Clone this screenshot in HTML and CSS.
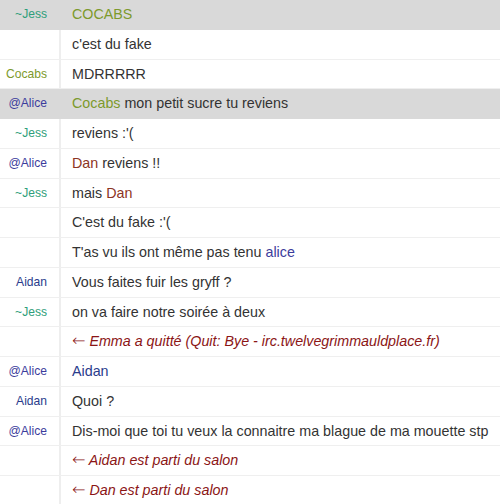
FILE: index.html
```html
<!DOCTYPE html>
<html lang="fr">
<head>
<meta charset="utf-8">
<title>Log</title>
<link rel="stylesheet" href="styles.css">
</head>
<body>
<div class="log">
  <div class="row hl"><div class="nick jess">~Jess</div><div class="msg"><span class="cocabs">COCABS</span></div></div>
  <div class="row"><div class="nick"></div><div class="msg">c'est du fake</div></div>
  <div class="row"><div class="nick cocabs">Cocabs</div><div class="msg">MDRRRRR</div></div>
  <div class="row hl"><div class="nick alice">@Alice</div><div class="msg"><span class="cocabs">Cocabs</span> mon petit sucre tu reviens</div></div>
  <div class="row"><div class="nick jess">~Jess</div><div class="msg">reviens :'(</div></div>
  <div class="row"><div class="nick alice">@Alice</div><div class="msg"><span class="dan">Dan</span> reviens !!</div></div>
  <div class="row"><div class="nick jess">~Jess</div><div class="msg">mais <span class="dan">Dan</span></div></div>
  <div class="row"><div class="nick"></div><div class="msg">C'est du fake :'(</div></div>
  <div class="row"><div class="nick"></div><div class="msg">T'as vu ils ont même pas tenu <span class="alice">alice</span></div></div>
  <div class="row"><div class="nick aidan">Aidan</div><div class="msg">Vous faites fuir les gryff ?</div></div>
  <div class="row"><div class="nick jess">~Jess</div><div class="msg">on va faire notre soirée à deux</div></div>
  <div class="row"><div class="nick"></div><div class="msg part"><span class="arrow">←</span> Emma a quitté (Quit: Bye - irc.twelvegrimmauldplace.fr)</div></div>
  <div class="row"><div class="nick alice">@Alice</div><div class="msg"><span class="aidan">Aidan</span></div></div>
  <div class="row"><div class="nick aidan">Aidan</div><div class="msg">Quoi ?</div></div>
  <div class="row"><div class="nick alice">@Alice</div><div class="msg">Dis-moi que toi tu veux la connaitre ma blague de ma mouette stp</div></div>
  <div class="row"><div class="nick"></div><div class="msg part"><span class="arrow">←</span> Aidan est parti du salon</div></div>
  <div class="row"><div class="nick"></div><div class="msg part"><span class="arrow">←</span> Dan est parti du salon</div></div>
</div>
</body>
</html>
```
FILE: styles.css
```css
html, body {
  margin: 0;
  padding: 0;
  background: #fff;
}
body {
  font-family: "Liberation Sans", Arial, sans-serif;
  color: #333;
}
.log {
  display: flex;
  flex-direction: column;
}
.row {
  display: flex;
  height: 29.75px;
  box-sizing: border-box;
  border-bottom: 1px solid #efefef;
}
.row.hl {
  background: #d9d9d9;
  border-bottom-color: #d9d9d9;
}
.nick {
  width: 61px;
  flex: none;
  box-sizing: border-box;
  padding-right: 12px;
  text-align: right;
  font-size: 12.1px;
  line-height: 28.75px;
  white-space: nowrap;
  border-right: 2px solid #eeeeee;
}
.row.hl .nick {
  border-right-color: #d9d9d9;
}
.msg {
  flex: 1;
  padding-left: 11px;
  font-size: 14.3px;
  line-height: 28.75px;
  white-space: nowrap;
}
.jess { color: #2f9e7a; }
.cocabs { color: #7d9a2c; }
.alice { color: #3c3c9c; }
.aidan { color: #2a3c8c; }
.dan { color: #8c3424; }
.part {
  color: #8b1515;
  font-style: italic;
}
.arrow {
  font-family: "DejaVu Sans", sans-serif;
  font-style: normal;
  font-weight: 200;
  font-size: 16px;
  line-height: 1;
}
```
